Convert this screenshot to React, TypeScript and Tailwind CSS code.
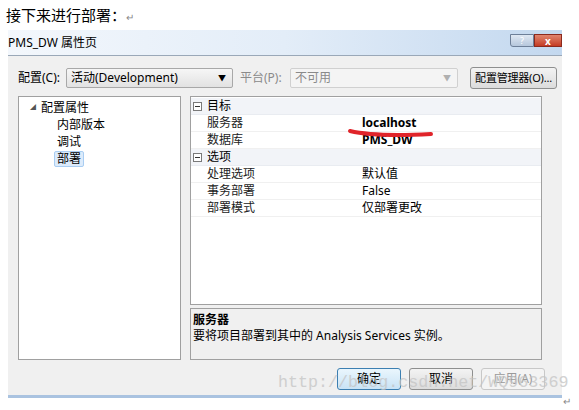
import * as React from "react";

const font = { fontFamily: '"Noto Sans", "Noto Sans CJK SC", sans-serif' };

const rows: { cat?: string; name?: string; value?: string; bold?: boolean }[] = [
  { cat: "目标" },
  { name: "服务器", value: "localhost", bold: true },
  { name: "数据库", value: "PMS_DW", bold: true },
  { cat: "选项" },
  { name: "处理选项", value: "默认值" },
  { name: "事务部署", value: "False" },
  { name: "部署模式", value: "仅部署更改" },
];

const Minus = () => (
  <span className="w-[9px] h-[9px] border border-[#7a7a7a] bg-white flex items-center justify-center">
    <span className="w-[5px] h-px bg-[#333]" />
  </span>
);

const Combo: React.FC<{ text: string; disabled?: boolean; w: string }> = ({ text, disabled, w }) => (
  <div
    className={`${w} h-[20px] flex items-center justify-between pl-[4px] pr-[6px] rounded-[2px] border ${
      disabled ? "border-[#d0d0d0] bg-[#f4f4f4] text-[#8a8a8a]" : "border-[#a8a8a8] bg-gradient-to-b from-[#f6f6f6] to-[#e2e2e2] text-black"
    }`}
  >
    <span>{text}</span>
    <span className={`text-[8px] ${disabled ? "text-[#b0b0b0]" : "text-black"}`}>▼</span>
  </div>
);

const Btn: React.FC<{ text: string; focus?: boolean; disabled?: boolean; w?: string }> = ({ text, focus, disabled, w = "w-[64px]" }) => (
  <div
    className={`${w} h-[22px] flex items-center justify-center whitespace-nowrap rounded-[3px] border ${
      disabled
        ? "border-[#c8c8c8] bg-[#f4f4f4] text-[#9a9a9a]"
        : focus
        ? "border-[#3c7fb1] bg-gradient-to-b from-[#eaf6fd] to-[#c9e3f5] text-black"
        : "border-[#8e8f8f] bg-gradient-to-b from-[#f3f3f3] to-[#dcdcdc] text-black"
    }`}
  >
    {text}
  </div>
);

export default function App() {
  return (
    <div className="w-[579px] h-[410px] bg-white relative overflow-hidden text-[12px] text-black" style={font}>
      <div className="h-[30px] pl-[6px] pt-[5px] text-[15px] leading-[20px]">
        接下来进行部署：<span className="text-[10px] text-[#888]">↵</span>
      </div>

      <div className="ml-[8px] w-[554px]">
        <div className="h-[26px] flex items-center justify-between bg-gradient-to-r from-[#f3f7fc] via-[#e3edf8] to-[#c3d8ef] border-b border-[#9aa8b8]">
          <span className="pt-[1px]">PMS_DW 属性页</span>
          <div className="flex self-start mt-[4px]">
            <div className="w-[24px] h-[13px] border border-[#6d7f98] rounded-bl-[3px] bg-gradient-to-b from-[#dfe8f3] to-[#b6c7dc] flex items-center justify-center text-[9px] text-white leading-none">?</div>
            <div className="w-[28px] h-[13px] border border-[#8b2a1e] bg-gradient-to-b from-[#e0846e] to-[#c43a22] flex items-center justify-center text-[10px] text-white font-bold leading-none">x</div>
          </div>
        </div>

        <div className="bg-[#f0f0f0] h-[342px] border-b-[3px] border-[#aac3e0] pl-[10px] pt-[12px]">
          <div className="flex items-center h-[20px]">
            <span className="w-[48px]">配置(C):</span>
            <Combo w="w-[167px]" text="活动(Development)" />
            <span className="w-[50px] ml-[7px] text-[#8a8a8a]">平台(P):</span>
            <Combo w="w-[168px]" text="不可用" disabled />
            <div className="ml-[12px] text-[11px] tracking-[-0.2px]">
              <Btn w="w-[87px]" text="配置管理器(O)..." />
            </div>
          </div>

          <div className="flex gap-[9px] mt-[8px]">
            <div className="w-[163px] h-[264px] bg-white border border-[#a0a0a0] pt-[2px]">
              <div className="h-[17px] flex items-center pl-[11px]">
                <span className="text-[6px] text-[#555] mr-[5px]">◢</span>配置属性
              </div>
              <div className="h-[17px] flex items-center pl-[38px]">内部版本</div>
              <div className="h-[17px] flex items-center pl-[38px]">调试</div>
              <div className="h-[17px] flex items-center pl-[35px]">
                <span className="px-[2px] bg-[#dcebfb] border border-[#a9cdf2] rounded-[2px] leading-[14px]">部署</span>
              </div>
            </div>

            <div className="w-[352px] flex flex-col gap-[3px]">
              <div className="h-[209px] bg-white border border-[#a0a0a0] pt-[1px]">
                {rows.map((r, i) =>
                  r.cat ? (
                    <div key={i} className="h-[17px] flex items-center gap-[5px] pl-[2px] bg-[#f2f4f8] border-b border-[#e9ecf1]">
                      <Minus />
                      <span>{r.cat}</span>
                    </div>
                  ) : (
                    <div key={i} className="h-[17px] flex items-center border-b border-[#f0f0f0]">
                      <span className="w-[171px] pl-[16px] text-[#222]">{r.name}</span>
                      <span className={r.bold ? "font-bold" : ""}>{r.value}</span>
                    </div>
                  )
                )}
              </div>
              <div className="h-[52px] border border-[#a0a0a0] bg-[#f0f0f0] px-[2px] pt-[3px] leading-[16px]">
                <div className="font-bold">服务器</div>
                <div>要将项目部署到其中的 Analysis Services 实例。</div>
              </div>
            </div>
          </div>

          <div className="flex justify-end gap-[8px] mt-[8px] pr-[17px]">
            <Btn text="确定" focus />
            <Btn text="取消" />
            <Btn text="应用(A)" disabled />
          </div>
        </div>
      </div>

      <svg className="absolute left-[347px] top-[126px]" width="88" height="14" viewBox="0 0 88 14">
        <path d="M3 5 C 20 9, 45 10, 84 8" stroke="#e0242a" strokeWidth="4" fill="none" strokeLinecap="round" />
      </svg>

      <div
        className="absolute left-[278px] top-[375px] text-[16.7px] text-[#c4c4c4] opacity-75 leading-none pointer-events-none"
        style={{ fontFamily: '"Liberation Mono", monospace' }}
      >
        http://blog.csdn.net/WQ963369
      </div>
      <span className="absolute left-[563px] top-[394px] text-[10px] text-[#888]">↵</span>
    </div>
  );
}
